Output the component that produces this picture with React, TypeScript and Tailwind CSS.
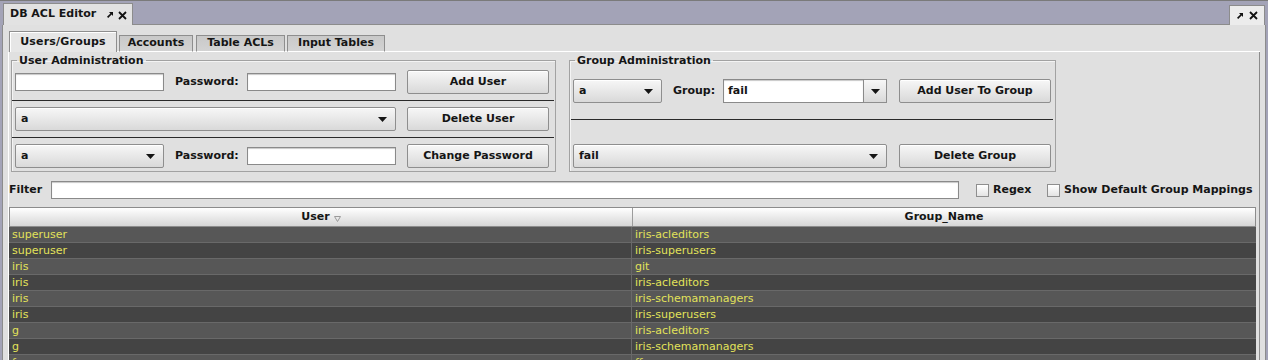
import React from "react";

const rows: [string, string][] = [
  ["superuser", "iris-acleditors"],
  ["superuser", "iris-superusers"],
  ["iris", "git"],
  ["iris", "iris-acleditors"],
  ["iris", "iris-schemamanagers"],
  ["iris", "iris-superusers"],
  ["g", "iris-acleditors"],
  ["g", "iris-schemamanagers"],
  ["f", "ff"],
  ["f", "fail"],
];

function DownArrow() {
  return (
    <svg width="9" height="5" viewBox="0 0 9 5" className="shrink-0">
      <path d="M0 0h9L4.5 5z" fill="#151515" />
    </svg>
  );
}

function PinIcon() {
  return (
    <svg width="8" height="8" viewBox="0 0 8 8">
      <path d="M3 1h4v4L5.6 3.6 2.2 7 1 5.8 4.4 2.4z" fill="#111" />
    </svg>
  );
}

function CloseIcon() {
  return (
    <svg width="9" height="9" viewBox="0 0 9 9">
      <path d="M1 1l7 7M8 1L1 8" stroke="#111" strokeWidth="1.8" />
    </svg>
  );
}

function Button({ label, w }: { label: string; w: string }) {
  return (
    <div
      className={`${w} h-[24px] shrink-0 flex items-center justify-center rounded-[2px] border border-[#8e8e8e] bg-gradient-to-b from-[#f7f7f7] to-[#d9d9d9] font-bold shadow-[inset_0_1px_0_#fff]`}
    >
      {label}
    </div>
  );
}

function Combo({ value, w }: { value: string; w: string }) {
  return (
    <div
      className={`${w} h-[24px] shrink-0 flex items-center justify-between pl-[5px] pr-[8px] rounded-[2px] border border-[#8e8e8e] bg-gradient-to-b from-[#f7f7f7] to-[#d9d9d9] font-bold shadow-[inset_0_1px_0_#fff]`}
    >
      <span>{value}</span>
      <DownArrow />
    </div>
  );
}

function TextInput({ w, value }: { w: string; value?: string }) {
  return (
    <div
      className={`${w} h-[18px] shrink-0 flex items-center pl-[4px] border border-[#8a8a8a] bg-white shadow-[inset_0_1px_1px_#c8c8c8] font-bold`}
    >
      {value}
    </div>
  );
}

function CheckBox() {
  return (
    <div className="w-[13px] h-[13px] shrink-0 border border-[#8e8e8e] bg-gradient-to-b from-[#ffffff] to-[#e4e4e4]" />
  );
}

function Separator({ cls }: { cls: string }) {
  return <div className={`${cls} h-[1px] bg-[#2a2a2a]`} />;
}

export default function App() {
  return (
    <div className="w-[1268px] h-[360px] overflow-hidden flex flex-col bg-[#a3a3b7] border-t border-[#7a7a7a] font-['DejaVu_Sans',sans-serif] text-[11px] text-[#151515]">
      {/* window title strip */}
      <div className="h-[24px] shrink-0 flex items-end pl-[3px] pr-[3px]">
        <div className="w-[130px] h-[22px] flex items-center justify-between pl-[6px] pr-[5px] bg-[#e2e2e2] border-t border-l border-r border-[#8c8c8c]">
          <span className="font-bold">DB ACL Editor</span>
          <div className="flex items-center gap-[4px] pt-[1px]">
            <PinIcon />
            <CloseIcon />
          </div>
        </div>
        <div className="flex-1 h-[1px] bg-[#8c8c8c]" />
        <div className="w-[36px] h-[20px] flex items-center justify-center gap-[5px] bg-[#ececec] border-t border-l border-r border-[#8c8c8c]">
          <PinIcon />
          <CloseIcon />
        </div>
      </div>

      {/* panel */}
      <div className="flex-1 min-h-0 flex flex-col ml-[2px] mr-[2px] pt-[6px] pl-[5px] pr-[5px] bg-[#e0e0e0] border-l border-r border-[#8c8c8c]">
        {/* inner tabs */}
        <div className="h-[21px] shrink-0 flex items-end pl-[1px]">
          <div className="w-[108px] h-[21px] flex items-center justify-center pt-[1px] tracking-[0.2px] font-bold bg-[#e6e6e6] border-t border-l border-r border-[#8e8e8e] shadow-[inset_1px_1px_0_#fff]">
            Users/Groups
          </div>
          <div className="w-[2px] h-[1px] bg-white" />
          <div className="w-[74px] h-[17px] flex items-center justify-center font-bold bg-gradient-to-b from-[#c9c9c9] to-[#d3d3d3] border-t border-l border-r border-b border-[#8e8e8e] border-b-white">
            Accounts
          </div>
          <div className="w-[3px] h-[1px] bg-white" />
          <div className="w-[89px] h-[17px] flex items-center justify-center font-bold bg-gradient-to-b from-[#c9c9c9] to-[#d3d3d3] border-t border-l border-r border-b border-[#8e8e8e] border-b-white">
            Table ACLs
          </div>
          <div className="w-[2px] h-[1px] bg-white" />
          <div className="w-[98px] h-[17px] flex items-center justify-center font-bold bg-gradient-to-b from-[#c9c9c9] to-[#d3d3d3] border-t border-l border-r border-b border-[#8e8e8e] border-b-white">
            Input Tables
          </div>
          <div className="flex-1 h-[1px] bg-white" />
        </div>

        {/* tab content */}
        <div className="flex-1 min-h-0 flex flex-col border-l border-r border-l-[#ffffff] border-r-[#8c8c8c]">
          <div className="flex pl-[2px] pt-[2px] gap-[13px]">
            {/* User Administration */}
            <fieldset className="w-[545px] h-[118px] border border-[#a2a2a2] shadow-[inset_1px_1px_0_#f4f4f4]">
              <legend className="ml-[5px] px-[2px] leading-[13px] font-bold">User Administration</legend>
              <div className="flex items-center h-[24px] mt-[3px] ml-[3px]">
                <TextInput w="w-[149px]" />
                <span className="w-[72px] ml-[11px] font-bold">Password:</span>
                <TextInput w="w-[149px]" />
                <div className="ml-[11px]">
                  <Button label="Add User" w="w-[142px]" />
                </div>
              </div>
              <Separator cls="mt-[6px] mb-[6px] mr-[1px]" />
              <div className="flex items-center h-[24px] ml-[3px]">
                <Combo value="a" w="w-[381px]" />
                <div className="ml-[11px]">
                  <Button label="Delete User" w="w-[142px]" />
                </div>
              </div>
              <Separator cls="mt-[6px] mb-[6px] mr-[1px]" />
              <div className="flex items-center h-[24px] ml-[3px]">
                <Combo value="a" w="w-[149px]" />
                <span className="w-[72px] ml-[11px] font-bold">Password:</span>
                <TextInput w="w-[149px]" />
                <div className="ml-[11px]">
                  <Button label="Change Password" w="w-[142px]" />
                </div>
              </div>
            </fieldset>

            {/* Group Administration */}
            <fieldset className="w-[487px] h-[118px] border border-[#a2a2a2] shadow-[inset_1px_1px_0_#f4f4f4]">
              <legend className="ml-[5px] px-[2px] leading-[13px] font-bold">Group Administration</legend>
              <div className="flex items-center h-[24px] mt-[12px] ml-[3px]">
                <Combo value="a" w="w-[89px]" />
                <span className="w-[50px] ml-[11px] font-bold">Group:</span>
                <div className="w-[164px] h-[24px] flex">
                  <div className="flex-1 h-[24px] flex items-center pl-[4px] bg-white border border-[#8a8a8a] shadow-[inset_0_1px_1px_#c8c8c8] font-bold">
                    fail
                  </div>
                  <div className="w-[23px] h-[24px] flex items-center justify-center border-t border-r border-b border-[#8e8e8e] bg-gradient-to-b from-[#f7f7f7] to-[#d9d9d9]">
                    <DownArrow />
                  </div>
                </div>
                <div className="ml-[12px]">
                  <Button label="Add User To Group" w="w-[152px]" />
                </div>
              </div>
              <Separator cls="mt-[16px] mb-[24px] ml-[1px] mr-[2px]" />
              <div className="flex items-center h-[24px] ml-[3px]">
                <Combo value="fail" w="w-[314px]" />
                <div className="ml-[12px]">
                  <Button label="Delete Group" w="w-[152px]" />
                </div>
              </div>
            </fieldset>
          </div>

          {/* filter row */}
          <div className="flex items-center h-[18px] mt-[9px]">
            <span className="w-[42px] font-bold">Filter</span>
            <TextInput w="w-[908px]" />
            <div className="ml-[17px]">
              <CheckBox />
            </div>
            <span className="w-[54px] ml-[4px] font-bold">Regex</span>
            <CheckBox />
            <span className="ml-[4px] font-bold">Show Default Group Mappings</span>
          </div>

          {/* table */}
          <div className="mt-[8px] w-[1247px] flex-1 min-h-0 flex flex-col">
            <div className="h-[20px] shrink-0 grid grid-cols-[623px_1fr] border border-[#8c8c8c] bg-gradient-to-b from-[#ffffff] to-[#d6d6d6] font-bold">
              <div className="flex items-center justify-center gap-[4px] border-r border-[#9c9c9c]">
                <span>User</span>
                <svg width="7" height="6" viewBox="0 0 7 6" className="mt-[3px]">
                  <path d="M0.5 0.5h6L3.5 5.5z" fill="none" stroke="#9a9a9a" />
                </svg>
              </div>
              <div className="flex items-center justify-center">Group_Name</div>
            </div>
            {rows.map(([user, group], i) => (
              <div
                key={i}
                className={`h-[16px] shrink-0 grid grid-cols-[623px_1fr] border-b border-[#696969] text-[#e2e25a] leading-[15px] ${
                  i % 2 === 0 ? "bg-[#575757]" : "bg-[#444444]"
                }`}
              >
                <div className="pl-[3px] border-r border-[#696969]">{user}</div>
                <div className="pl-[3px]">{group}</div>
              </div>
            ))}
          </div>
        </div>
      </div>
    </div>
  );
}
